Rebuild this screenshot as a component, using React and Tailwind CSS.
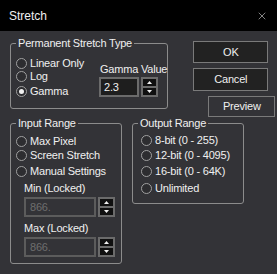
import { X } from 'lucide-react'

const font = { fontFamily: '"Liberation Sans", Arial, sans-serif' }

const Radio = ({ label, checked, className = '' }) => (
  <div className={`flex items-center gap-[3px] h-[13px] ${className}`}>
    <span className="w-[11px] h-[11px] rounded-full border border-[#a0a0a0] bg-[#2d2d30] flex items-center justify-center shrink-0">
      {checked ? <span className="w-[5px] h-[5px] rounded-full bg-[#f0f0f0]" /> : null}
    </span>
    <span className="whitespace-nowrap">{label}</span>
  </div>
)

const Spin = () => (
  <div className="w-[17px] h-[20px] bg-[#6b6b6b] p-[2px] flex flex-col gap-[2px] shrink-0">
    <div className="flex-1 bg-[#101010] flex items-center justify-center">
      <svg width="5" height="3" viewBox="0 0 5 3"><path d="M2.5 0 L5 3 L0 3 Z" fill="#f0f0f0" /></svg>
    </div>
    <div className="flex-1 bg-[#101010] flex items-center justify-center">
      <svg width="5" height="3" viewBox="0 0 5 3"><path d="M0 0 L5 0 L2.5 3 Z" fill="#f0f0f0" /></svg>
    </div>
  </div>
)

const Group = ({ title, className = '', children }) => (
  <fieldset className={`border border-[#8c8c8c] rounded-[3px] ${className}`}>
    <legend className="ml-[5px] px-[2px] leading-[13px]">{title}</legend>
    {children}
  </fieldset>
)

const LockedField = ({ label, className = '' }) => (
  <div className={className}>
    <div className="ml-[13px] leading-[13px]">{label}</div>
    <div className="flex items-center gap-[2px] ml-[13px] mt-[2px]">
      <div className="w-[72px] h-[20px] border-2 border-[#5c5c5c] bg-[#333337] text-[#6e6e6e] pl-[4px] leading-[16px]">866.</div>
      <Spin />
    </div>
  </div>
)

const Btn = ({ label, className = '' }) => (
  <div className={`flex items-center justify-center border border-[#7a7a7a] ${className}`}>{label}</div>
)

export default function App(){
  return (
    <div className="w-[277px] h-[274px] bg-[#333337] text-[#f0f0f0] text-[11px] tracking-[-0.2px] overflow-hidden" style={font}>
      <div className="h-[31px] bg-black flex items-center justify-between pl-[9px] pr-[9px]">
        <span className="text-[12px] tracking-normal">Stretch</span>
        <X size={12} strokeWidth={1.1} className="text-[#f0f0f0]" />
      </div>

      <div className="flex items-start">
        <Group title="Permanent Stretch Type" className="ml-[10px] mt-[6px] w-[157px] h-[72px]">
          <div className="flex pl-[5px]">
            <div className="mt-[7px] w-[83px]">
              <Radio label="Linear Only" />
              <Radio label="Log" />
              <Radio label="Gamma" checked className="mt-[2px]" />
            </div>
            <div className="mt-[13px]">
              <div className="leading-[13px] ml-[1px] whitespace-nowrap">Gamma Value</div>
              <div className="flex items-center gap-[2px] mt-[1px]">
                <div className="w-[40px] h-[20px] border-2 border-[#6b6b6b] bg-[#1e1e1e] pl-[3px] leading-[16px]">2.3</div>
                <Spin />
              </div>
            </div>
          </div>
        </Group>

        <div className="ml-[25px] mt-[10px] flex flex-col">
          <Btn label="OK" className="w-[75px] h-[22px] bg-[#222222]" />
          <Btn label="Cancel" className="w-[75px] h-[23px] mt-[5px] bg-[#222222]" />
          <Btn label="Preview" className="w-[67px] h-[21px] mt-[5px] ml-[15px] bg-[#333337]" />
        </div>
      </div>

      <div className="flex items-start ml-[10px]">
        <Group title="Input Range" className="w-[112px] h-[147px]">
          <div className="pl-[5px]">
            <Radio label="Max Pixel" className="mt-[5px]" />
            <Radio label="Screen Stretch" className="mt-[1px]" />
            <Radio label="Manual Settings" className="mt-[3px]" />
          </div>
          <LockedField label="Min (Locked)" className="mt-[4px]" />
          <LockedField label="Max (Locked)" className="mt-[5px]" />
        </Group>

        <Group title="Output Range" className="ml-[10px] w-[112px] h-[87px]">
          <div className="pl-[8px]">
            <Radio label="8-bit (0 - 255)" className="mt-[4px]" />
            <Radio label="12-bit (0 - 4095)" className="mt-[2px]" />
            <Radio label="16-bit (0 - 64K)" className="mt-[3px]" />
            <Radio label="Unlimited" className="mt-[4px]" />
          </div>
        </Group>
      </div>
    </div>
  )
}
